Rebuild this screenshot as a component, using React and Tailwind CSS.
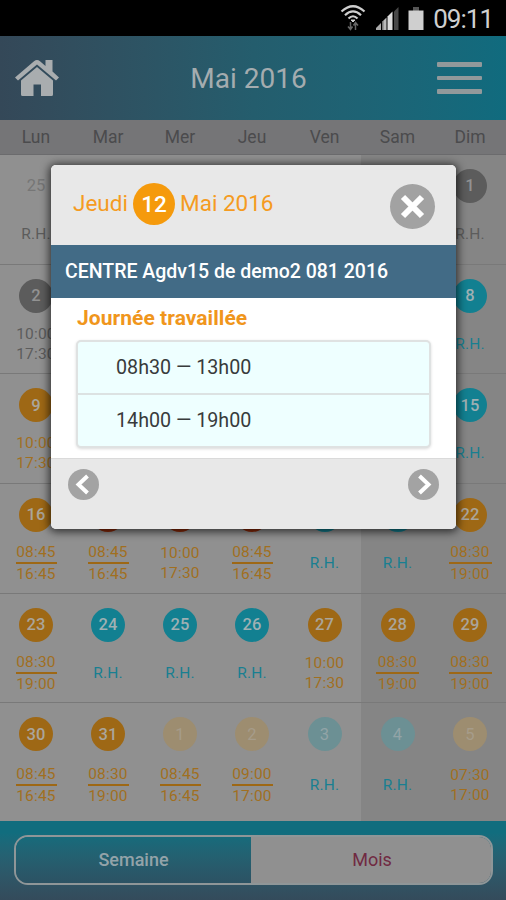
import { clsx } from 'clsx';

const days = ['Lun', 'Mar', 'Mer', 'Jeu', 'Ven', 'Sam', 'Dim'];

// n = day number, c = circle color, t = hours, line = bar between both hours
const weeks = [
  [{ n: '25', c: 'none', t: 'R.H.' }, {}, {}, {}, {}, {}, { n: '1', c: 'gray', t: 'R.H.' }],
  [{ n: '2', c: 'gray', t: ['10:00', '17:30'] }, {}, {}, {}, {}, {}, { n: '8', c: 'teal', t: 'R.H.' }],
  [{ n: '9', c: 'orange', t: ['10:00', '17:30'] }, {}, {}, {}, {}, {}, { n: '15', c: 'teal', t: 'R.H.' }],
  [
    { n: '16', c: 'orange', t: ['08:45', '16:45'], line: true },
    { c: 'red', t: ['08:45', '16:45'], line: true },
    { c: 'red', t: ['10:00', '17:30'] },
    { c: 'red', t: ['08:45', '16:45'], line: true },
    { c: 'teal', t: 'R.H.' },
    { c: 'teal', t: 'R.H.' },
    { n: '22', c: 'orange', t: ['08:30', '19:00'], line: true },
  ],
  [
    { n: '23', c: 'orange', t: ['08:30', '19:00'], line: true },
    { n: '24', c: 'teal', t: 'R.H.' },
    { n: '25', c: 'teal', t: 'R.H.' },
    { n: '26', c: 'teal', t: 'R.H.' },
    { n: '27', c: 'orange', t: ['10:00', '17:30'] },
    { n: '28', c: 'orange', t: ['08:30', '19:00'], line: true },
    { n: '29', c: 'orange', t: ['08:30', '19:00'], line: true },
  ],
  [
    { n: '30', c: 'orange', t: ['08:45', '16:45'], line: true },
    { n: '31', c: 'orange', t: ['08:30', '19:00'], line: true },
    { n: '1', c: 'paleOrange', t: ['08:45', '16:45'], line: true },
    { n: '2', c: 'paleOrange', t: ['09:00', '17:00'], line: true },
    { n: '3', c: 'paleTeal', t: 'R.H.' },
    { n: '4', c: 'paleTeal', t: 'R.H.' },
    { n: '5', c: 'paleOrange', t: ['07:30', '17:00'] },
  ],
];

const circles = {
  none: 'text-[#767676] font-normal',
  gray: 'bg-[#5c5c5c] text-[#929292]',
  teal: 'bg-[#128091] text-[#9fb0b3]',
  orange: 'bg-[#9e6815] text-[#aaa59b]',
  red: 'bg-[#8f2a08] text-[#aaa59b]',
  paleOrange: 'bg-[#9d8d70] text-[#a69c8a] font-normal',
  paleTeal: 'bg-[#6c9094] text-[#92a4a7] font-normal',
};

function StatusBar() {
  return (
    <div className="h-9 bg-black flex items-center justify-end pr-[14px] text-[#cfcfcf]">
      <svg width="26" height="28" viewBox="0 0 26 28" fill="none" stroke="currentColor" className="mr-[10px]">
        <path d="M1.5 7.5Q13-3 24.5 7.5" strokeWidth="2.2" />
        <path d="M5 11.2Q13 3.5 21 11.2" strokeWidth="2.2" />
        <path d="M8.5 14.5Q13 10 17.5 14.5" strokeWidth="2.2" />
        <path d="M11 16h4L13 18z" fill="currentColor" strokeWidth="1" />
        <path d="M10.5 18v7M8 22.5l2.5 3 2-3M15.5 26v-7M13.5 21.5l2-3 2.5 3" stroke="#666" strokeWidth="1.5" />
      </svg>
      <svg width="23" height="23" viewBox="0 0 23 23" className="mr-[9px]">
        <path d="M0 23v-2l5-5v7z" fill="#aaa" />
        <path d="M6 23v-8l4.5-4.5V23z" fill="#bbb" />
        <path d="M6 23v-8l1.5-1.5V23z" fill="#777" />
        <path d="M11.5 23V9.5L16.5 4.5V23z" fill="#ddd" />
        <path d="M18 23V4.5L22.5 0v23z" fill="#484848" />
      </svg>
      <svg width="16" height="23" viewBox="0 0 16 23" className="mr-[9px]">
        <path d="M5 0h6v4H5z" fill="#555" />
        <path d="M0.5 3.5h15V23h-15z" fill="#cfcfcf" />
      </svg>
      <span className="text-[26px] leading-9 tracking-[-1px] pt-[2px] -mr-px">09:11</span>
    </div>
  );
}

function Header() {
  return (
    <header className="h-[84px] flex items-center justify-between pl-[14px] pr-6 bg-linear-to-r from-[#344858] via-[#245d6d] to-[#106b7e]">
      <svg width="46" height="38" viewBox="0 0 46 38" fill="#a9adaf">
        <path d="M1 18.5L20 2.2Q23-.2 26 2.2L31.5 7V1H38.5V12.5L45 18.5L42 21.5L23 5.5L4 21.5Z" />
        <path d="M23 8L39 21.5V35.5Q39 37 37.5 37H27V25.5H19.5V37H8.5Q7 37 7 35.5V21.5Z" />
      </svg>
      <h1 className="text-[28px] leading-none text-[#a4acaf] pt-px">Mai 2016</h1>
      <div className="flex flex-col gap-[9px] w-[45px]">
        <span className="h-[5px] rounded-[1px] bg-[#92999b]" />
        <span className="h-[4px] rounded-[1px] bg-[#92999b]" />
        <span className="h-[5px] rounded-[1px] bg-[#92999b]" />
      </div>
    </header>
  );
}

function Day({ day, weekend, last }) {
  const teal = day.c === 'teal' || day.c === 'paleTeal';
  const gray = day.c === 'none' || day.c === 'gray';
  return (
    <div className={clsx('flex flex-col items-center pt-[14px]', weekend && 'bg-[#858585]')}>
      {day.c && (
        <>
          <div className={clsx('size-[34px] rounded-full flex items-center justify-center pt-px text-[16.5px] font-medium shrink-0', circles[day.c])}>
            {day.n}
          </div>
          <div
            className={clsx(
              'h-[44px] flex flex-col items-center justify-center text-[15.5px] leading-5 tracking-[0.2px]',
              last ? 'mt-[12px]' : 'mt-[9px]',
              teal ? 'text-[#197f91]' : gray ? 'text-[#5c5c5c]' : 'text-[#a16f1f]'
            )}
          >
            {Array.isArray(day.t) ? (
              <>
                <span>{day.t[0]}</span>
                {day.line && <span className={clsx('h-[2px] shrink-0 bg-[#9e6815]', weekend ? 'w-[43px]' : 'w-[41px]')} />}
                <span>{day.t[1]}</span>
              </>
            ) : (
              <span>{day.t}</span>
            )}
          </div>
        </>
      )}
    </div>
  );
}

function Calendar() {
  return (
    <main className="h-[701px] flex flex-col bg-[#909090]">
      <div className="h-[35px] shrink-0 grid grid-cols-[72px_72px_72px_72px_73px_73px_72px] bg-[#757577] border-b border-[#6b6b6d] text-center text-[17.5px] leading-[34px] text-[#4b4b4d]">
        {days.map((d) => (
          <span key={d}>{d}</span>
        ))}
      </div>
      {weeks.map((week, i) => (
        <div
          key={i}
          className={clsx(
            'grid grid-cols-[72px_72px_72px_72px_73px_73px_72px]',
            i < 5 ? 'h-[109.7px] shrink-0 border-b border-[#797979]' : 'flex-1'
          )}
        >
          {week.map((day, j) => (
            <Day key={j} day={day} weekend={j > 4} last={i === 5} />
          ))}
        </div>
      ))}
    </main>
  );
}

function Chevron({ flip }) {
  return (
    <button className="size-[31px] rounded-full bg-[#a3a3a3] flex items-center justify-center">
      <svg width="31" height="31" viewBox="0 0 31 31" fill="none" stroke="#fff" strokeWidth="4" className={clsx(flip && 'rotate-180')}>
        <path d="M19.5 7L10.5 15.5L19.5 24" />
      </svg>
    </button>
  );
}

function DayDialog() {
  return (
    <div className="absolute left-[51px] top-[165px] w-[405px] h-[364px] rounded-[5px] overflow-hidden bg-white flex flex-col shadow-[0_1px_9px_2px_rgba(0,0,0,0.65)]">
      <div className="h-[80px] shrink-0 bg-[#e8e8e8] flex items-center pl-[22px] pr-[21px] text-[22.5px] text-[#f59b21]">
        <span className="w-[60px] pb-[2px]">Jeudi</span>
        <span className="size-[42px] mb-[2px] rounded-full bg-[#f59a0c] text-white font-medium flex items-center justify-center pt-px">12</span>
        <span className="pl-[5px] pb-[2px]">Mai 2016</span>
        <button className="ml-auto mt-[3px] size-[45px] rounded-full bg-[#a2a2a2] flex items-center justify-center">
          <svg width="45" height="45" viewBox="0 0 45 45" stroke="#fff" strokeWidth="6">
            <path d="M13 13L32 32M32 13L13 32" />
          </svg>
        </button>
      </div>
      <div className="h-[53px] shrink-0 bg-[#426b86] text-white text-[19.5px] font-medium leading-[53px] pl-[14px] whitespace-nowrap">
        CENTRE Agdv15 de demo2 081 2016
      </div>
      <div className="flex-1 px-[25px]">
        <h2 className="text-[21px] font-bold leading-[41px] h-[42px] pl-px tracking-[0.05px] text-[#f0961c] whitespace-nowrap">Journée travaillée</h2>
        <div className="h-[108px] rounded-[5px] border-2 border-[#dfe2e2] bg-[#eeffff] shadow-[0_1px_3px_rgba(0,0,0,0.15)] text-[19.7px] text-[#383b3b]">
          <div className="h-[53px] border-b-2 border-[#dce2e2] pl-[38px] leading-[51px]">08h30 — 13h00</div>
          <div className="pl-[38px] leading-[51px]">14h00 — 19h00</div>
        </div>
      </div>
      <div className="h-[71px] shrink-0 bg-[#e8e8e8] border-t border-[#dadada] flex justify-between px-[17px] pt-[10px]">
        <Chevron />
        <Chevron flip />
      </div>
    </div>
  );
}

function ViewSwitch() {
  return (
    <footer className="h-[79px] pl-[14px] pr-[13px] pt-[14px] bg-linear-to-b from-[#116d7e] from-15% to-[#344b5b]">
      <div className="h-[50px] rounded-[14px] border-2 border-[#8f9698] overflow-hidden flex text-[18px] leading-[46px] text-center">
        <div className="w-[235px] bg-linear-to-b from-[#176b7b] to-[#2c5263] text-[#93a3a9] font-medium">Semaine</div>
        <div className="flex-1 bg-[#909090] text-[#702a42] pl-[2px]">Mois</div>
      </div>
    </footer>
  );
}

export default function App() {
  return (
    <div className="relative w-[506px] h-[900px] overflow-hidden font-[Roboto,sans-serif]">
      <StatusBar />
      <Header />
      <Calendar />
      <ViewSwitch />
      <DayDialog />
    </div>
  );
}
